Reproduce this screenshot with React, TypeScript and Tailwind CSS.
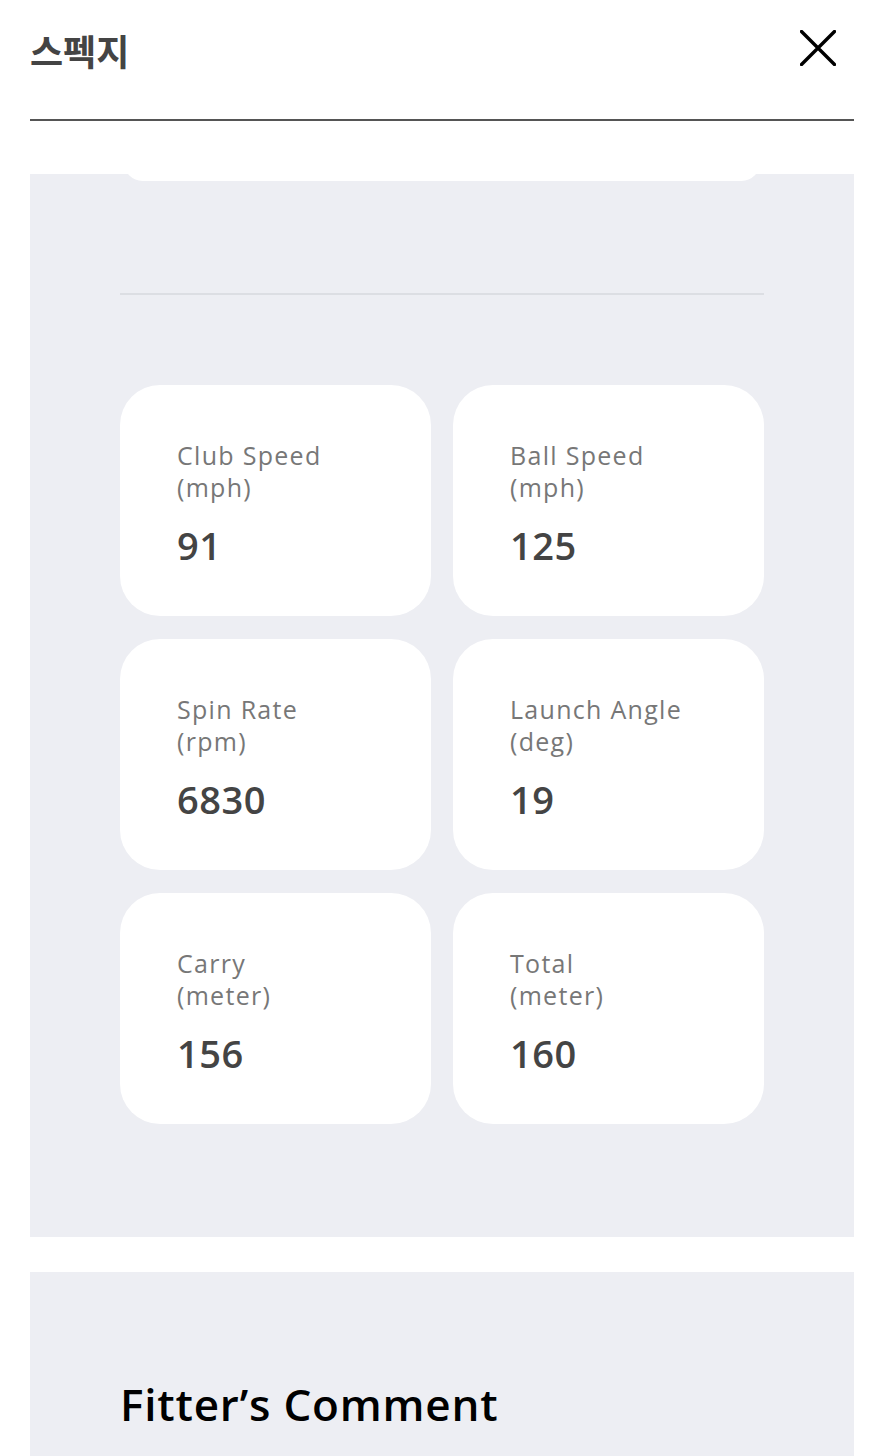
const stats = [
  { label: 'Club Speed', unit: '(mph)', value: '91' },
  { label: 'Ball Speed', unit: '(mph)', value: '125' },
  { label: 'Spin Rate', unit: '(rpm)', value: '6830' },
  { label: 'Launch Angle', unit: '(deg)', value: '19' },
  { label: 'Carry', unit: '(meter)', value: '156' },
  { label: 'Total', unit: '(meter)', value: '160' },
];

const App = () => {
  return (
    <div className="w-full h-screen bg-white overflow-hidden font-['Open_Sans','Noto_Sans_CJK_KR',sans-serif]">
      {/* Header */}
      <div className="ml-[30px] mr-[21px] h-[121px] border-b-2 border-[#555] flex justify-between items-start pr-[18px]">
        <h1 className="mt-[28px] text-[36px] font-bold leading-[44px] text-[#444] font-['Noto_Sans_CJK_KR',sans-serif]">
          스펙지
        </h1>
        <svg className="mt-[30px]" width="36" height="36" viewBox="0 0 36 36" fill="none">
          <path d="M1.5 1.5L34.5 34.5M34.5 1.5L1.5 34.5" stroke="#000" strokeWidth="3.4" strokeLinecap="round" />
        </svg>
      </div>

      {/* Stats panel */}
      <div className="ml-[30px] mr-[21px] mt-[53px] bg-[#EDEEF3] overflow-hidden px-[90px] pb-[113px]">
        <div className="-mt-[30px] mx-[4px] h-[37px] rounded-[34px] bg-white" />
        <div className="mt-[112px] h-[2px] bg-[#DCDEE3]" />
        <div className="mt-[90px] grid grid-cols-2 gap-x-[22px] gap-y-[23px]">
          {stats.map((s) => (
            <div key={s.label} className="h-[231px] rounded-[40px] bg-white pl-[57px] pt-[54px]">
              <div className="text-[25px] leading-[32px] text-[#777] tracking-[1.3px]">
                <div>{s.label}</div>
                <div>{s.unit}</div>
              </div>
              <div className="mt-[19px] text-[38px] leading-[46px] font-semibold text-[#444] tracking-[0.5px]">{s.value}</div>
            </div>
          ))}
        </div>
      </div>

      {/* Fitter's comment */}
      <div className="ml-[30px] mr-[21px] mt-[35px] bg-[#EDEEF3] px-[90px] pt-[104px] pb-[40px]">
        <h2 className="text-[44px] leading-[56px] font-semibold text-black tracking-[0.8px]">Fitter’s Comment</h2>
      </div>
    </div>
  );
};

export default App;
